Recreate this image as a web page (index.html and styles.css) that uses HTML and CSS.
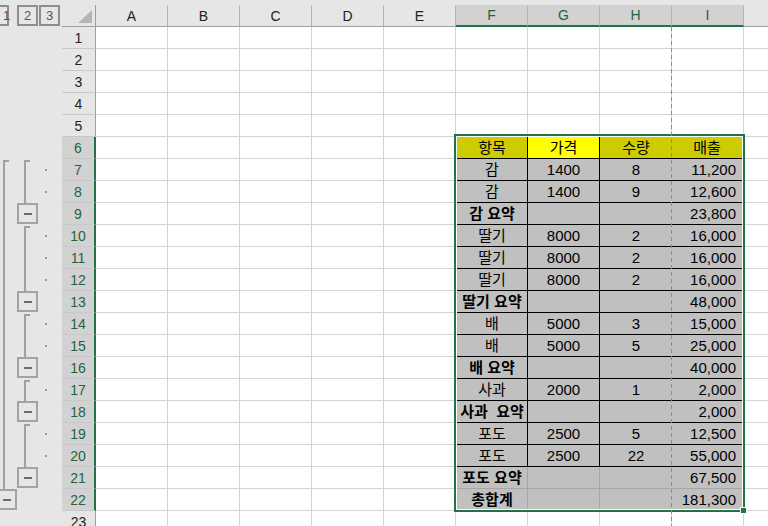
FILE: index.html
```html
<!DOCTYPE html>
<html lang="ko">
<head>
    <meta charset="UTF-8">
    <meta name="viewport" content="width=device-width, initial-scale=1.0">
    <title>Sheet1 - 부분합</title>
    <link rel="stylesheet" href="styles.css">
</head>
<body>
    <div class="top-strip"></div>
    <div class="sheet">
        <!-- outline (group) bar -->
        <div class="outline">
            <div class="levels">
                <span class="lvl lvl-first">1</span>
                <span class="lvl">2</span>
                <span class="lvl">3</span>
            </div>
            <div class="orow"></div>
            <div class="orow"></div>
            <div class="orow"></div>
            <div class="orow"></div>
            <div class="orow"></div>
            <div class="orow"></div>
            <!-- 7 -->
            <div class="orow"><span class="slot"><i class="bar start"></i></span><span class="slot"><i class="bar start"></i></span><span class="slot"><i class="dot"></i></span></div>
            <div class="orow"><span class="slot"><i class="bar"></i></span><span class="slot"><i class="bar"></i></span><span class="slot"><i class="dot"></i></span></div>
            <div class="orow"><span class="slot"><i class="bar"></i></span><span class="slot"><b class="minus"></b></span></div>
            <!-- 10 -->
            <div class="orow"><span class="slot"><i class="bar"></i></span><span class="slot"><i class="bar start"></i></span><span class="slot"><i class="dot"></i></span></div>
            <div class="orow"><span class="slot"><i class="bar"></i></span><span class="slot"><i class="bar"></i></span><span class="slot"><i class="dot"></i></span></div>
            <div class="orow"><span class="slot"><i class="bar"></i></span><span class="slot"><i class="bar"></i></span><span class="slot"><i class="dot"></i></span></div>
            <div class="orow"><span class="slot"><i class="bar"></i></span><span class="slot"><b class="minus"></b></span></div>
            <!-- 14 -->
            <div class="orow"><span class="slot"><i class="bar"></i></span><span class="slot"><i class="bar start"></i></span><span class="slot"><i class="dot"></i></span></div>
            <div class="orow"><span class="slot"><i class="bar"></i></span><span class="slot"><i class="bar"></i></span><span class="slot"><i class="dot"></i></span></div>
            <div class="orow"><span class="slot"><i class="bar"></i></span><span class="slot"><b class="minus"></b></span></div>
            <!-- 17 -->
            <div class="orow"><span class="slot"><i class="bar"></i></span><span class="slot"><i class="bar start"></i></span><span class="slot"><i class="dot"></i></span></div>
            <div class="orow"><span class="slot"><i class="bar"></i></span><span class="slot"><b class="minus"></b></span></div>
            <!-- 19 -->
            <div class="orow"><span class="slot"><i class="bar"></i></span><span class="slot"><i class="bar start"></i></span><span class="slot"><i class="dot"></i></span></div>
            <div class="orow"><span class="slot"><i class="bar"></i></span><span class="slot"><i class="bar"></i></span><span class="slot"><i class="dot"></i></span></div>
            <div class="orow"><span class="slot"><i class="bar"></i></span><span class="slot"><b class="minus"></b></span></div>
            <!-- 22 -->
            <div class="orow"><span class="slot"><b class="minus"></b></span></div>
            <div class="orow"></div>
        </div>

        <div class="grid">
            <div class="colheads">
                <div class="corner"><span class="corner-tri"></span></div>
                <div class="colhead">A</div>
                <div class="colhead">B</div>
                <div class="colhead">C</div>
                <div class="colhead">D</div>
                <div class="colhead">E</div>
                <div class="colhead sel">F</div>
                <div class="colhead sel">G</div>
                <div class="colhead sel">H</div>
                <div class="colhead sel">I</div>
                <div class="colhead rest"></div>
            </div>
            <div class="body">
                <div class="rowheads">
                    <div class="rowhead">1</div>
                    <div class="rowhead">2</div>
                    <div class="rowhead">3</div>
                    <div class="rowhead">4</div>
                    <div class="rowhead">5</div>
                    <div class="rowhead sel">6</div>
                    <div class="rowhead sel">7</div>
                    <div class="rowhead sel">8</div>
                    <div class="rowhead sel">9</div>
                    <div class="rowhead sel">10</div>
                    <div class="rowhead sel">11</div>
                    <div class="rowhead sel">12</div>
                    <div class="rowhead sel">13</div>
                    <div class="rowhead sel">14</div>
                    <div class="rowhead sel">15</div>
                    <div class="rowhead sel">16</div>
                    <div class="rowhead sel">17</div>
                    <div class="rowhead sel">18</div>
                    <div class="rowhead sel">19</div>
                    <div class="rowhead sel">20</div>
                    <div class="rowhead sel">21</div>
                    <div class="rowhead sel">22</div>
                    <div class="rowhead">23</div>
                </div>

                <div class="cells">
                    <div class="data">
                        <div class="r head">
                            <div class="c">항목</div><div class="c yellow">가격</div><div class="c">수량</div><div class="c">매출</div>
                        </div>
                        <div class="r"><div class="c">감</div><div class="c">1400</div><div class="c">8</div><div class="c">11,200</div></div>
                        <div class="r"><div class="c">감</div><div class="c">1400</div><div class="c">9</div><div class="c">12,600</div></div>
                        <div class="r sum"><div class="c">감 요약</div><div class="c"></div><div class="c"></div><div class="c">23,800</div></div>
                        <div class="r"><div class="c">딸기</div><div class="c">8000</div><div class="c">2</div><div class="c">16,000</div></div>
                        <div class="r"><div class="c">딸기</div><div class="c">8000</div><div class="c">2</div><div class="c">16,000</div></div>
                        <div class="r"><div class="c">딸기</div><div class="c">8000</div><div class="c">2</div><div class="c">16,000</div></div>
                        <div class="r sum"><div class="c">딸기 요약</div><div class="c"></div><div class="c"></div><div class="c">48,000</div></div>
                        <div class="r"><div class="c">배</div><div class="c">5000</div><div class="c">3</div><div class="c">15,000</div></div>
                        <div class="r"><div class="c">배</div><div class="c">5000</div><div class="c">5</div><div class="c">25,000</div></div>
                        <div class="r sum"><div class="c">배 요약</div><div class="c"></div><div class="c"></div><div class="c">40,000</div></div>
                        <div class="r"><div class="c">사과</div><div class="c">2000</div><div class="c">1</div><div class="c">2,000</div></div>
                        <div class="r sum"><div class="c">사과&nbsp; 요약</div><div class="c"></div><div class="c"></div><div class="c">2,000</div></div>
                        <div class="r"><div class="c">포도</div><div class="c">2500</div><div class="c">5</div><div class="c">12,500</div></div>
                        <div class="r"><div class="c">포도</div><div class="c">2500</div><div class="c">22</div><div class="c">55,000</div></div>
                        <div class="r sum soft"><div class="c">포도 요약</div><div class="c"></div><div class="c"></div><div class="c">67,500</div></div>
                        <div class="r sum soft last"><div class="c">총합계</div><div class="c"></div><div class="c"></div><div class="c">181,300</div></div>
                        <span class="fill-handle"></span>
                    </div>
                    <div class="pagebreak"></div>
                </div>
            </div>
        </div>
    </div>
</body>
</html>
```

FILE: styles.css
```css
html,
body {
    margin: 0;
    height: 100%;
    overflow: hidden;
}

body {
    background: #e6e6e6;
    font-family: "Liberation Sans", "Noto Sans CJK KR", sans-serif;
    color: #000;
}

.top-strip {
    height: 5px;
}

.sheet {
    display: flex;
}

/* ---------- outline bar ---------- */

.outline {
    width: 62px;
    flex: none;
}

.levels {
    height: 22px;
    display: flex;
    margin-left: -12px;
}

.lvl {
    width: 21px;
    height: 21px;
    box-sizing: border-box;
    border: 2px solid #8e8e8e;
    margin-right: 1px;
    display: flex;
    align-items: center;
    justify-content: center;
    font-size: 13px;
    color: #555;
}

/* first button is partly scrolled out on the left */
.lvl-first {
    justify-content: flex-start;
    padding-left: 13px;
    margin-right: 8px;
}

.orow {
    height: 22px;
    display: flex;
    margin-left: -4px;
}

.slot {
    width: 21px;
    height: 22px;
    box-sizing: border-box;
    padding-left: 7px;
    display: flex;
    flex-direction: column;
}

.bar {
    flex: 1;
    width: 0;
    border-left: 2px solid #a0a0a0;
}

.bar.start {
    margin-top: 1px;
    width: 4px;
    border-top: 2px solid #a0a0a0;
}

.dot {
    width: 2px;
    height: 2px;
    margin-top: 10px;
    background: #9a9a9a;
}

.minus {
    width: 21px;
    height: 21px;
    margin-left: -7px;
    box-sizing: border-box;
    border: 2px solid #a3a3a3;
    display: flex;
    align-items: center;
    justify-content: center;
}

.minus::after {
    content: "";
    width: 8px;
    height: 2px;
    background: #6b6b6b;
}

/* ---------- headers ---------- */

.grid {
    flex: 1;
}

.colheads {
    display: flex;
    height: 22px;
}

.corner {
    width: 34px;
    flex: none;
    box-sizing: border-box;
    border-right: 1px solid #9e9e9e;
    border-bottom: 1px solid #9e9e9e;
    display: flex;
    align-items: flex-end;
    justify-content: flex-end;
    padding: 0 3px 3px 0;
}

.corner-tri {
    width: 14px;
    height: 13px;
    background: #b4b4b4;
    clip-path: polygon(100% 0, 100% 100%, 0 100%);
}

.colhead {
    width: 72px;
    flex: none;
    box-sizing: border-box;
    border-right: 1px solid #b4b4b4;
    border-bottom: 1px solid #9e9e9e;
    display: flex;
    align-items: center;
    justify-content: center;
    font-size: 14px;
    color: #222;
}

.colhead.sel {
    background: #d2d2d2;
    color: #1f6340;
    border-bottom: 2px solid #217346;
}

.colhead.rest {
    flex: 1;
    border-right: none;
}

.body {
    display: flex;
}

.rowheads {
    width: 34px;
    flex: none;
}

.rowhead {
    height: 22px;
    box-sizing: border-box;
    border-right: 1px solid #9e9e9e;
    border-bottom: 1px solid #c8c8c8;
    display: flex;
    align-items: center;
    justify-content: center;
    font-size: 14px;
    color: #222;
}

.rowhead.sel {
    background: #d2d2d2;
    color: #1f6340;
    border-right: 2px solid #217346;
}

/* ---------- cells ---------- */

.cells {
    flex: 1;
    position: relative;
    height: 506px;
    background-color: #fff;
    background-image:
        repeating-linear-gradient(to right, transparent 0 71px, #d4d4d4 71px 72px),
        repeating-linear-gradient(to bottom, transparent 0 21px, #d4d4d4 21px 22px);
}

.data {
    position: relative;
    width: max-content;
    margin-left: 358px;
    margin-top: 107px;
    border: 2px solid #217346;
    padding: 1px;
    background: #fff;
    display: grid;
    grid-template-columns: 71px 72px 72px 70px;
    grid-template-rows: repeat(16, 22px) 20px;
}

.r {
    display: contents;
}

.c {
    box-sizing: border-box;
    background: #c0c0c0;
    border-bottom: 1px solid #000;
    display: flex;
    align-items: center;
    justify-content: center;
    font-size: 15px;
    line-height: 1;
    white-space: nowrap;
}

.r > .c:nth-child(-n+2) {
    border-right: 1px solid #000;
}

.r > .c:nth-child(4) {
    justify-content: flex-end;
    padding-right: 6px;
}

.r.head > .c {
    background: #cccc00;
}

.r.head > .c:nth-child(4) {
    justify-content: center;
    padding-right: 0;
}

.r.head > .c.yellow {
    background: #ffff00;
}

.r.sum > .c:first-child {
    font-weight: bold;
}

.r.soft > .c {
    border-color: #a6a6a6;
}

.r.last > .c {
    border-bottom: none;
}

.fill-handle {
    position: absolute;
    right: -4px;
    bottom: -4px;
    width: 5px;
    height: 5px;
    background: #217346;
    border: 1px solid #fff;
}

.pagebreak {
    position: absolute;
    top: 0;
    bottom: 0;
    left: 575px;
    width: 1px;
    background: repeating-linear-gradient(to bottom, #8c8c8c 0 4px, transparent 4px 7px);
}
```
